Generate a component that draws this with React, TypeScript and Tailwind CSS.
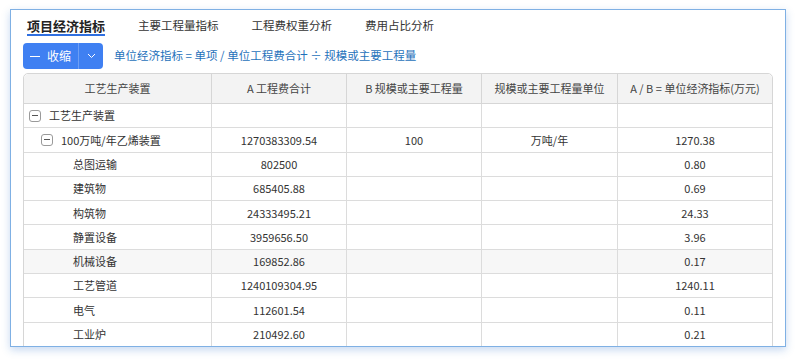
const rows = [
  { name: '工艺生产装置', level: 0, tree: true, a: '', b: '', unit: '', ab: '' },
  { name: '100万吨/年乙烯装置', level: 1, tree: true, a: '1270383309.54', b: '100', unit: '万吨/年', ab: '1270.38' },
  { name: '总图运输', level: 2, a: '802500', b: '', unit: '', ab: '0.80' },
  { name: '建筑物', level: 2, a: '685405.88', b: '', unit: '', ab: '0.69' },
  { name: '构筑物', level: 2, a: '24333495.21', b: '', unit: '', ab: '24.33' },
  { name: '静置设备', level: 2, a: '3959656.50', b: '', unit: '', ab: '3.96' },
  { name: '机械设备', level: 2, a: '169852.86', b: '', unit: '', ab: '0.17', hover: true },
  { name: '工艺管道', level: 2, a: '1240109304.95', b: '', unit: '', ab: '1240.11' },
  { name: '电气', level: 2, a: '112601.54', b: '', unit: '', ab: '0.11' },
  { name: '工业炉', level: 2, a: '210492.60', b: '', unit: '', ab: '0.21' },
]

const cols = 'grid grid-cols-[188px_135px_135px_136px_1fr]'

function MinusBox() {
  return (
    <span className="mr-2 flex h-[12px] w-[12px] items-center justify-center rounded-[3px] border border-[#9a9a9a] bg-white">
      <span className="h-px w-[6px] bg-[#555]" />
    </span>
  )
}

export default function App() {
  return (
    <div className="h-[364px] w-[800px] bg-white pl-[10px] pt-[9px]" style={{ fontFamily: '"Noto Sans CJK SC", "Noto Sans", sans-serif' }}>
      <div className="h-[338px] w-[776px] overflow-hidden border border-[#7fb0e4] bg-white px-[12px] pt-[7px] shadow-[0_3px_8px_rgba(70,130,210,0.3)]">
        <div className="flex items-start gap-[33px] pl-[4px]">
          <div className="border-b-2 border-[#2f6fe0] text-[13px] font-bold leading-[17px] text-[#222]">项目经济指标</div>
          <div className="text-[11.5px] leading-[17px] text-[#333]">主要工程量指标</div>
          <div className="text-[11.5px] leading-[17px] text-[#333]">工程费权重分析</div>
          <div className="text-[11.5px] leading-[17px] text-[#333]">费用占比分析</div>
        </div>

        <div className="mt-[7px] flex items-center">
          <div className="flex h-[26px] items-stretch overflow-hidden rounded-[4px] bg-[#3f80f2] text-white">
            <div className="flex w-[55px] items-center justify-center gap-[7px] text-[12px]">
              <span className="h-px w-[10px] bg-white" />
              <span>收缩</span>
            </div>
            <div className="w-px bg-[#6d9ef5]" />
            <div className="flex w-[24px] items-center justify-center">
              <svg width="9" height="6" viewBox="0 0 9 6" fill="none">
                <path d="M1 1l3.5 3.5L8 1" stroke="#fff" strokeWidth="1" />
              </svg>
            </div>
          </div>
          <div className="ml-[11px] text-[11.5px] text-[#1f72bb]">单位经济指标 = 单项 / 单位工程费合计 ÷ 规模或主要工程量</div>
        </div>

        <div className="mt-[4px] rounded-t-[5px] border border-[#d6d6d6] text-[11px] text-[#333]">
          <div className={`${cols} h-[30px] rounded-t-[5px] border-b border-[#d6d6d6] bg-[#f3f3f3] text-[#444]`}>
            {['工艺生产装置', 'A 工程费合计', 'B 规模或主要工程量', '规模或主要工程量单位', 'A / B = 单位经济指标(万元)'].map((h, i) => (
              <div key={h} className={`flex items-center justify-center ${i < 4 ? 'border-r border-[#d6d6d6]' : ''}`}>{h}</div>
            ))}
          </div>
          {rows.map((r) => (
            <div key={r.name} className={`${cols} h-[24.3px] border-b border-[#dcdcdc] ${r.hover ? 'bg-[#f7f7f7]' : 'bg-white'}`}>
              <div
                className={`flex items-center border-r border-[#dcdcdc] ${r.level === 0 ? 'pl-[5px]' : r.level === 1 ? 'pl-[17px]' : 'pl-[49px]'}`}
              >
                {r.tree && <MinusBox />}
                <span>{r.name}</span>
              </div>
              <div className="flex items-center justify-center border-r border-[#dcdcdc]">{r.a}</div>
              <div className="flex items-center justify-center border-r border-[#dcdcdc]">{r.b}</div>
              <div className="flex items-center justify-center border-r border-[#dcdcdc]">{r.unit}</div>
              <div className="flex items-center justify-center">{r.ab}</div>
            </div>
          ))}
          <div className={`${cols} h-[24px]`}>
            <div className="border-r border-t-2 border-[#8db8f0] border-r-[#dcdcdc]" />
            <div className="border-r border-[#dcdcdc]" />
            <div className="border-r border-[#dcdcdc]" />
            <div className="border-r border-[#dcdcdc]" />
            <div />
          </div>
        </div>
      </div>
    </div>
  )
}
